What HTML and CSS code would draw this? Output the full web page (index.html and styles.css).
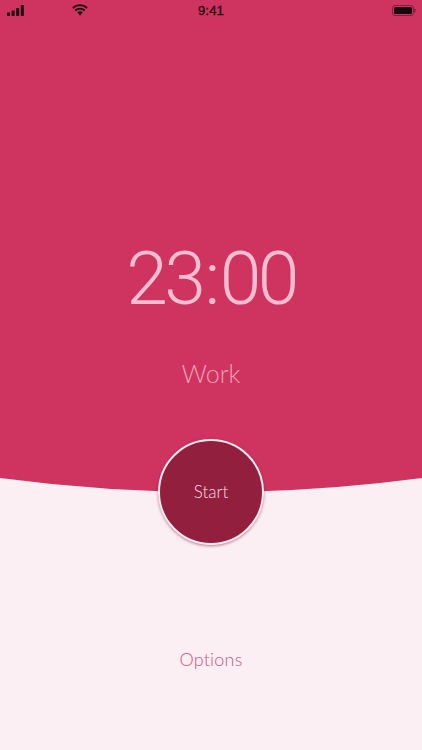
FILE: index.html
```html
<!DOCTYPE html>
<html lang="en">
<head>
<meta charset="utf-8">
<title>Timer</title>
<link rel="stylesheet" href="styles.css">
</head>
<body>
<main class="screen">
  <section class="hero">
    <div class="status">
      <div class="status-left">
        <svg class="signal" width="18" height="11" viewBox="0 0 18 11"><rect x="0" y="7.5" width="3" height="3.5" rx=".7"/><rect x="4.6" y="5.5" width="3" height="5.5" rx=".7"/><rect x="9.2" y="3" width="3" height="8" rx=".7"/><rect x="13.8" y="0" width="3" height="11" rx=".7"/></svg>
        <svg class="wifi" width="16" height="12" viewBox="0 0 16 12"><path d="M8 1.2c2.8 0 5.3 1 7.2 2.8" class="arc"/><path d="M3.2 6.2C4.500 5 6.200 4.300 8 4.300s3.500.7 4.800 1.900" class="arc" transform="translate(0 .3)"/><path d="M.8 4C2.700 2.200 5.200 1.200 8 1.200" class="arc"/><path d="M5.200 8.300 8 11.500l2.800-3.200C10.100 7.600 9.100 7.200 8 7.200s-2.100.4-2.800 1.100z"/></svg>
      </div>
      <span class="clock">9:41</span>
      <svg class="battery" width="24" height="11" viewBox="0 0 24 11"><rect class="shell" x=".5" y=".5" width="21" height="10" rx="2.800"/><rect x="2" y="2" width="18" height="7" rx="1.500"/><rect class="cap" x="22.300" y="3.800" width="1.200" height="3.400" rx=".5"/></svg>
    </div>
    <div class="time"><span>23</span><span class="colon">:</span><span>00</span></div>
    <div class="mode">Work</div>
  </section>
  <svg class="curve" width="422" height="16" viewBox="0 0 422 16" preserveAspectRatio="none"><path d="M0 0V1Q211 29 422 1V0Z"/></svg>
  <button class="start" type="button">Start</button>
  <section class="bottom">
    <a class="options">Options</a>
  </section>
</main>
</body>
</html>
```

FILE: styles.css
```css
* { box-sizing: border-box; }
html, body { margin: 0; padding: 0; }
body { font-family: Lato, "Open Sans", sans-serif; background: #fbeff3; }
.screen { position: relative; width: 422px; height: 750px; overflow: hidden; display: flex; flex-direction: column; background: #fbeff3; }
.hero { height: 477px; background: #cf335f; display: flex; flex-direction: column; align-items: center; }
.status { width: 100%; height: 20px; padding: 0 7px; display: grid; grid-template-columns: 1fr auto 1fr; align-items: center; color: #1a0a10; }
.status-left { display: flex; align-items: center; gap: 47px; }
.status svg { fill: #1c060d; display: block; }
.wifi { margin-top: -1px; }
.arc { fill: none; stroke: #1c060d; stroke-width: 1.800; }
.clock { font-family: "Liberation Sans", sans-serif; font-size: 13px; font-weight: 400; letter-spacing: .2px; -webkit-text-stroke: .3px #1c060d; }
.battery { justify-self: end; margin-right: -1px; }
.status svg .shell { fill: none; stroke: #1c060d; stroke-opacity: .45; }
.status svg .cap { fill-opacity: .45; }
.time { margin-top: 212px; font-family: Roboto, Lato, sans-serif; font-size: 75px; line-height: 92px; font-weight: 300; color: #f8bfd1; letter-spacing: -3.500px; }
.colon { margin: 0 3px 0 2px; }
.mode { margin-top: 33px; font-size: 25px; line-height: 32px; font-weight: 300; color: #f0a0b9; }
.curve { position: absolute; left: 0; top: 477px; fill: #cf335f; display: block; }
.start { position: absolute; left: 158px; top: 439px; width: 106px; height: 106px; border-radius: 50%; border: 2px solid #fbeaf0; background: #931f3f; color: #fbdbe4; font-family: Lato, sans-serif; font-weight: 300; font-size: 17px; padding: 0 0 1px; box-shadow: 0 1px 3px rgba(120, 30, 60, .55); }
.bottom { flex: 1; display: flex; justify-content: center; padding-top: 169px; }
.options { font-size: 18px; line-height: 26px; font-weight: 300; color: #cf5480; letter-spacing: .2px; }
```
